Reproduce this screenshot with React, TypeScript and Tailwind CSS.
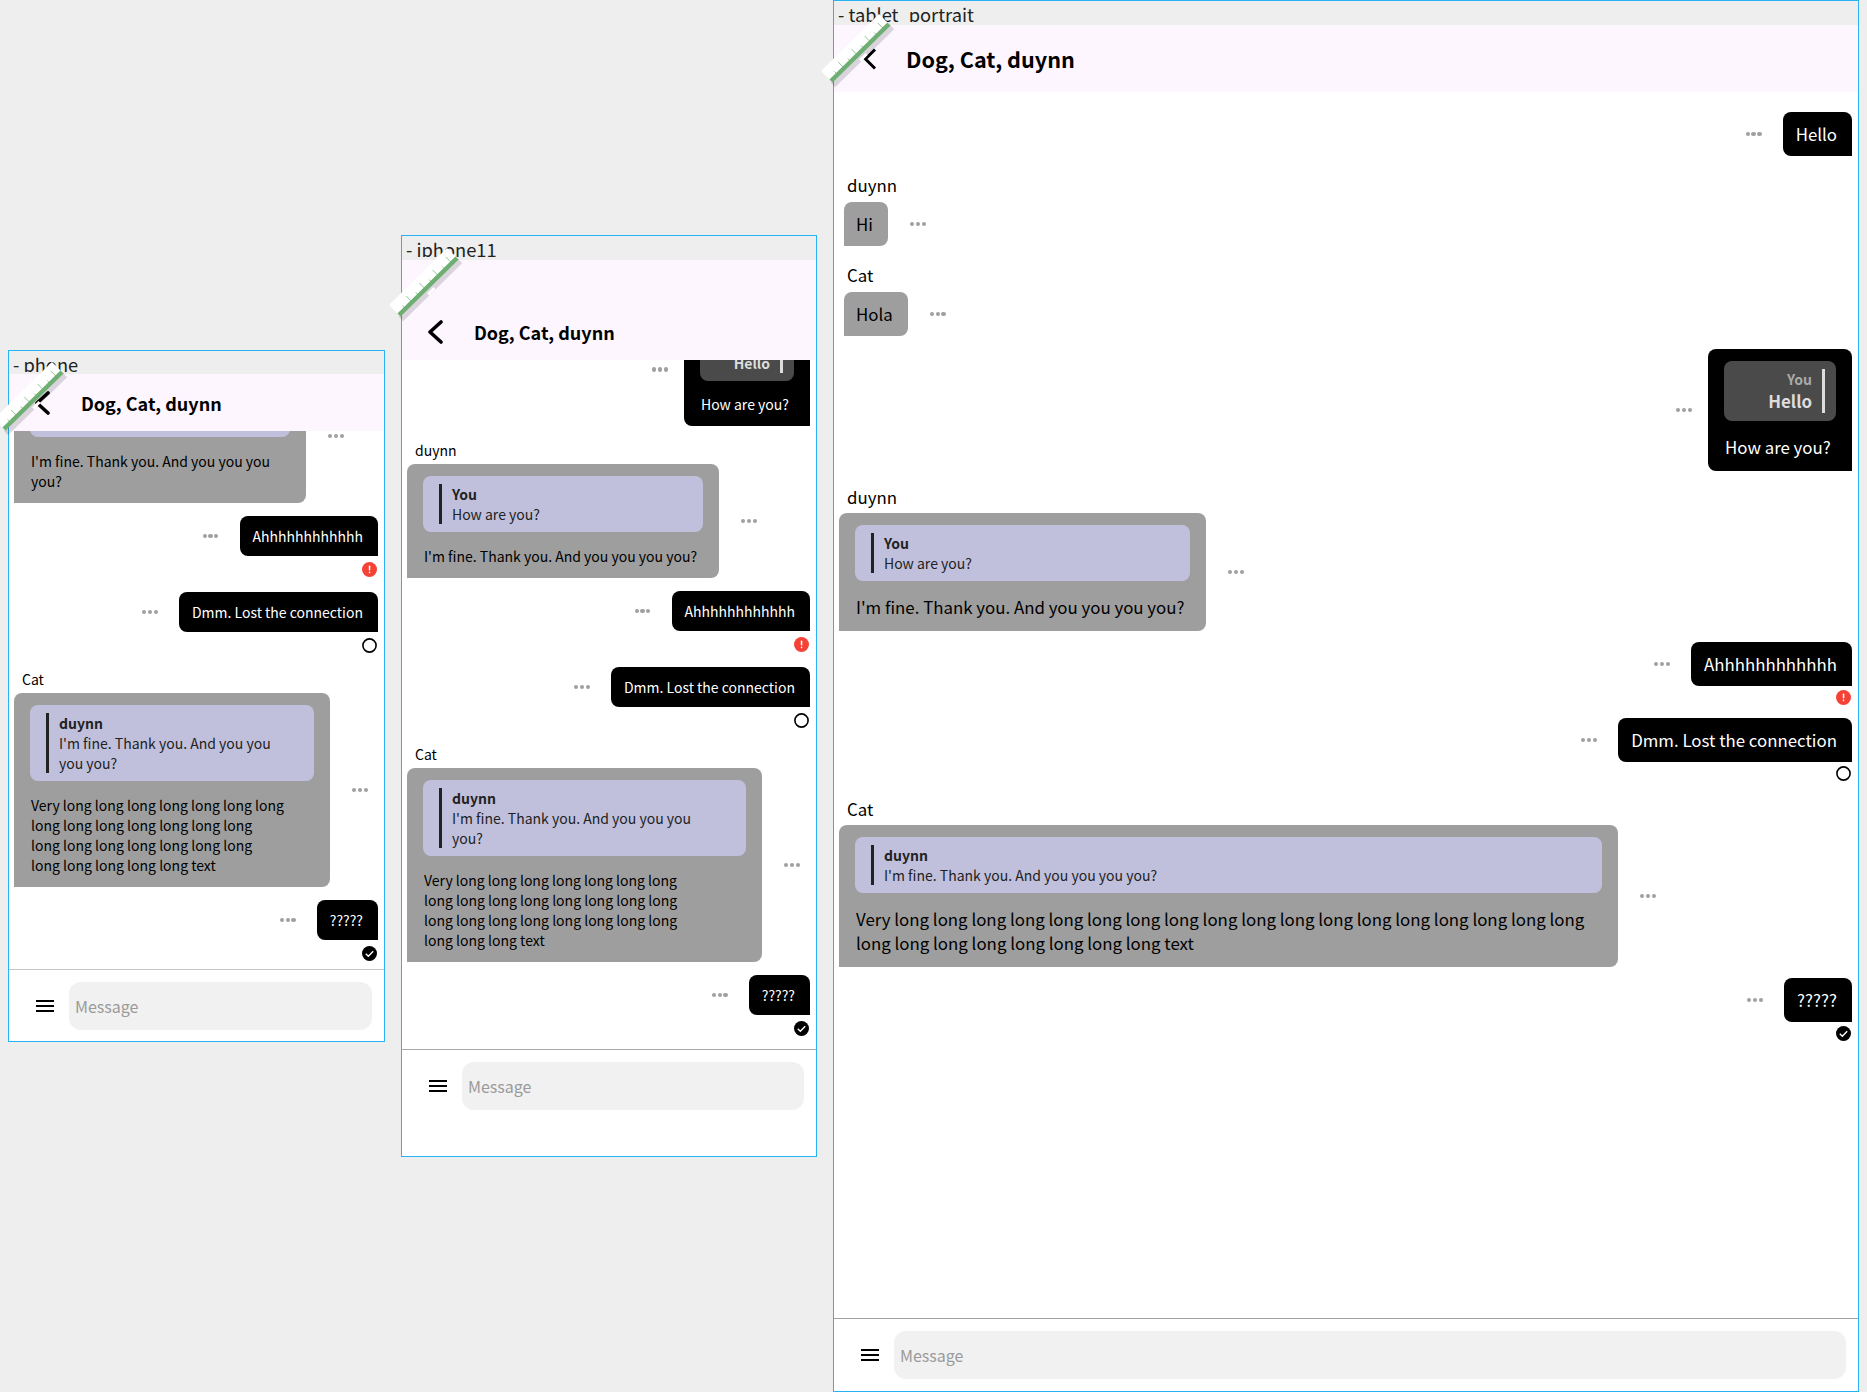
import React from "react";

type Size = {
  text: string;
  name: string;
  statusGap: string;
  title: string;
  quoteTextGap: string;
};

const small: Size = {
  text: "text-[14px] leading-[20px]",
  name: "text-[14px] leading-[20px]",
  statusGap: "mt-[6px]",
  title: "text-[18px] leading-[26px]",
  quoteTextGap: "mt-[13px]",
};

const large: Size = {
  text: "text-[16.85px] leading-[24px]",
  name: "text-[16.85px] leading-[24px]",
  statusGap: "mt-[4px]",
  title: "text-[21.6px] leading-[30px]",
  quoteTextGap: "mt-[14px]",
};

function Dots() {
  return (
    <div className="flex w-[16px] shrink-0 gap-[1.5px]">
      <span className="h-[4.33px] w-[4.33px] rounded-full bg-[#a0a0a0]" />
      <span className="h-[4.33px] w-[4.33px] rounded-full bg-[#a0a0a0]" />
      <span className="h-[4.33px] w-[4.33px] rounded-full bg-[#a0a0a0]" />
    </div>
  );
}

function StatusIcon({ kind }: { kind: "error" | "sending" | "sent" }) {
  if (kind === "error") {
    return (
      <svg width="15" height="15" viewBox="0 0 15 15">
        <circle cx="7.5" cy="7.5" r="7.5" fill="#f44336" />
        <rect x="6.8" y="3.6" width="1.5" height="4.8" rx="0.6" fill="#fff" />
        <rect x="6.8" y="9.6" width="1.5" height="1.6" rx="0.6" fill="#fff" />
      </svg>
    );
  }
  if (kind === "sending") {
    return (
      <svg width="15" height="15" viewBox="0 0 15 15">
        <circle cx="7.5" cy="7.5" r="6.6" fill="none" stroke="#000" strokeWidth="1.6" />
      </svg>
    );
  }
  return (
    <svg width="15" height="15" viewBox="0 0 15 15">
      <circle cx="7.5" cy="7.5" r="7.5" fill="#000" />
      <path d="M3.8 7.8 L6.3 10.2 L11.2 5.2" fill="none" stroke="#fff" strokeWidth="1.4" />
    </svg>
  );
}

function Sent({
  size,
  text,
  status,
  mt,
  width,
  children,
}: {
  size: Size;
  text: string;
  status?: "error" | "sending" | "sent";
  mt: string;
  width?: string;
  children?: React.ReactNode;
}) {
  return (
    <div className={`shrink-0 ${mt}`}>
      <div className={`flex items-center justify-end ${children ? "gap-4" : "gap-[21px]"}`}>
        <Dots />
        {children ? (
          <div className={`rounded-lg rounded-br-none bg-black pb-3 pl-4 pr-4 pt-3 text-white ${size.text} ${width ?? ""}`}>
            {children}
            <p className={`whitespace-nowrap pl-[1px] ${size.quoteTextGap}`}>{text}</p>
          </div>
        ) : (
          <div className={`rounded-lg rounded-br-none bg-black py-[10px] pl-[13px] pr-[15px] text-white ${size.text}`}>
            {text}
          </div>
        )}
      </div>
      {status && (
        <div className={`flex justify-end pr-[1.5px] ${size.statusGap}`}>
          <StatusIcon kind={status} />
        </div>
      )}
    </div>
  );
}

function SentQuote({ who, text, textClass }: { who: string; text: string; textClass: string }) {
  return (
    <div className="rounded-lg bg-[#4a4a4a] py-2 pr-[11px]">
      <div className="flex justify-end gap-[10px]">
        <div className="text-right">
          <p className="text-[14px] font-bold leading-[20px] text-[#aaaaaa]">{who}</p>
          <p className={`font-bold text-[#dddddd] ${textClass}`}>{text}</p>
        </div>
        <div className="w-[3px] bg-[#dddddd]" />
      </div>
    </div>
  );
}

function Quote({ who, text }: { who: string; text: string }) {
  return (
    <div className="rounded-lg bg-[#c0c0dc] py-2 pl-4 pr-4">
      <div className="flex gap-[10px]">
        <div className="w-[3px] shrink-0 bg-[#222222]" />
        <div className="text-[14px] leading-[20px] text-[#222222]">
          <p className="font-bold">{who}</p>
          <p className="whitespace-pre-line">{text}</p>
        </div>
      </div>
    </div>
  );
}

function Received({
  size,
  name,
  mt,
  nameGap,
  width,
  text,
  quote,
  inset,
}: {
  size: Size;
  name: string;
  mt: string;
  nameGap: string;
  width?: string;
  text: string;
  quote?: { who: string; text: string };
  inset?: boolean;
}) {
  return (
    <div className={`shrink-0 ${mt}`}>
      <p className={`ml-[8px] text-black ${size.name} ${nameGap}`}>{name}</p>
      <div className={`flex items-center gap-[22px] ${inset ? "ml-[5px]" : ""}`}>
        {quote ? (
          <div className={`shrink-0 rounded-lg rounded-bl-none bg-[#9e9e9e] pb-3 pl-4 pr-4 pt-3 text-black ${size.text} ${width ?? ""}`}>
            <Quote who={quote.who} text={quote.text} />
            <p className="mt-[14px] whitespace-pre-line pl-[1px]">{text}</p>
          </div>
        ) : (
          <div className={`rounded-lg rounded-bl-none bg-[#9e9e9e] py-[10px] pl-3 pr-[15px] text-black ${size.text}`}>
            {text}
          </div>
        )}
        <Dots />
      </div>
    </div>
  );
}

function BackArrow({ big }: { big: boolean }) {
  return big ? (
    <svg width="24" height="22" viewBox="0 0 24 22">
      <path d="M17 1.5 L7.5 11 L17 20.5" fill="none" stroke="#000" strokeWidth="3" />
    </svg>
  ) : (
    <svg width="24" height="24" viewBox="0 0 24 24">
      <path d="M18 2 L7 12 L18 22" fill="none" stroke="#000" strokeWidth="3.6" strokeLinecap="round" strokeLinejoin="round" />
    </svg>
  );
}

function Ruler({ place }: { place: string }) {
  const ticks = [1, 2, 3, 4, 5, 6, 7, 8];
  return (
    <svg className={`pointer-events-none absolute ${place}`} width="80" height="84" viewBox="0 0 80 84">
      <path d="M11 74 L70 16" stroke="#000" strokeOpacity="0.14" strokeWidth="6" />
      <polygon points="9,70 67,13 57,3 -1,60" fill="#ffffff" />
      {ticks.map((t) => (
        <line
          key={t}
          x1={9 + t * 6.6}
          y1={70 - t * 6.5}
          x2={9 + t * 6.6 - (t % 2 === 0 ? 6 : 3)}
          y2={70 - t * 6.5 - (t % 2 === 0 ? 6 : 3)}
          stroke="#8fc594"
          strokeWidth="1"
        />
      ))}
      <path d="M9 70 L67 13" stroke="#6fae72" strokeWidth="4.5" />
      <rect x="37" y="45" width="9" height="3" fill="#ffffff" transform="rotate(-45 41 46.5)" />
    </svg>
  );
}

function Frame({
  label,
  labelHeight,
  rulerPlace,
  className,
  headerClass,
  titleGap,
  footerClass,
  listClass,
  divider,
  size,
  big,
  children,
}: {
  label: string;
  labelHeight: string;
  rulerPlace: string;
  className: string;
  headerClass: string;
  titleGap: string;
  footerClass: string;
  listClass: string;
  divider: string;
  size: Size;
  big?: boolean;
  children: React.ReactNode;
}) {
  return (
    <div className={`relative flex shrink-0 flex-col border border-[#2ab3f3] ${className}`}>
      <div className={`shrink-0 ${labelHeight}`}>
        <div className="h-[21px] overflow-hidden whitespace-nowrap pl-1 pt-[1px] text-[18.3px] leading-[24px] text-[#222222]">
          {label}
        </div>
      </div>
      <div className={`flex shrink-0 items-center bg-[#fdf6ff] ${headerClass}`}>
        <BackArrow big={!!big} />
        <p className={`font-bold text-black ${size.title} ${titleGap}`}>Dog, Cat, duynn</p>
      </div>
      <div className={`flex min-h-0 flex-1 flex-col overflow-hidden bg-white pl-[5px] pr-[6px] ${listClass}`}>
        {children}
      </div>
      <div className={`flex shrink-0 items-center gap-[15px] border-t bg-white pl-[27px] pr-3 pt-3 ${divider} ${footerClass}`}>
        <div className="flex w-[18px] shrink-0 flex-col gap-[3px]">
          <span className="h-[2px] bg-black" />
          <span className="h-[2px] bg-black" />
          <span className="h-[2px] bg-black" />
        </div>
        <input
          placeholder="Message"
          className="h-[48px] min-w-0 flex-1 rounded-xl bg-[#f1f1f1] pl-[6px] text-[16px] text-black outline-none placeholder:text-[#9a9a9a]"
        />
      </div>
      <Ruler place={rulerPlace} />
    </div>
  );
}

const longPhone =
  "Very long long long long long long long\nlong long long long long long long\nlong long long long long long long\nlong long long long long text";
const longIphone =
  "Very long long long long long long long\nlong long long long long long long long\nlong long long long long long long long\nlong long long text";
const longTablet =
  "Very long long long long long long long long long long long long long long long long long long\nlong long long long long long long long text";

function SmallChat({ long, bubble, longBubble, quoteText }: { long: string; bubble: string; longBubble: string; quoteText: string }) {
  return (
    <>
      <Sent size={small} text="Hello" mt="mt-0" />
      <Received size={small} name="duynn" mt="mt-[14px]" nameGap="mb-1" text="Hi" inset />
      <Received size={small} name="Cat" mt="mt-[14px]" nameGap="mb-1" text="Hola" inset />
      <Sent size={small} text="How are you?" mt="mt-[13px]" width="w-[126px]">
        <SentQuote who="You" text="Hello" textClass="text-[14px] leading-[20px]" />
      </Sent>
      <Received
        size={small}
        name="duynn"
        mt="mt-[14px]"
        nameGap="mb-1"
        width={bubble}
        text="I'm fine. Thank you. And you you you you?"
        quote={{ who: "You", text: "How are you?" }}
      />
      <Sent size={small} text="Ahhhhhhhhhhhh" status="error" mt="mt-[13px]" />
      <Sent size={small} text="Dmm. Lost the connection" status="sending" mt="mt-[15px]" />
      <Received
        size={small}
        name="Cat"
        mt="mt-[16px]"
        nameGap="mb-1"
        width={longBubble}
        text={long}
        quote={{ who: "duynn", text: quoteText }}
      />
      <Sent size={small} text="?????" status="sent" mt="mt-[13px]" />
    </>
  );
}

export default function App() {
  return (
    <div className="flex h-[1392px] items-start gap-4 overflow-hidden bg-[#eeeeee] pl-2 font-['Noto_Sans_CJK_SC',sans-serif]">
      <Frame
        label="- phone"
        labelHeight="h-[23px]"
        rulerPlace="left-[-14px] top-[8px]"
        className="mt-[350px] h-[692px] w-[377px]"
        headerClass="h-[57px] pl-[21px]"
        titleGap="ml-[27px]"
        footerClass="pb-[11px]"
        listClass="justify-end pb-[8px]"
        divider="border-[#c4c4c4]"
        size={small}
      >
        <SmallChat
          long={longPhone}
          bubble="w-[292px]"
          longBubble="w-[316px]"
          quoteText={"I'm fine. Thank you. And you you\nyou you?"}
        />
      </Frame>

      <Frame
        label="- iphone11"
        labelHeight="h-[24px]"
        rulerPlace="left-[-12px] top-[9px]"
        className="mt-[235px] h-[922px] w-[416px]"
        headerClass="h-[100px] pl-[21px] pt-[44px]"
        titleGap="ml-[27px]"
        footerClass="pb-[46px]"
        listClass="justify-end pb-[13px]"
        divider="border-[#a8a8a8]"
        size={small}
      >
        <SmallChat
          long={longIphone}
          bubble="w-[312px]"
          longBubble="w-[355px]"
          quoteText={"I'm fine. Thank you. And you you you\nyou?"}
        />
      </Frame>

      <Frame
        label="- tablet_portrait"
        labelHeight="h-[24px]"
        rulerPlace="left-[-12px] top-[10px]"
        className="h-[1392px] w-[1026px]"
        headerClass="h-[67px] pl-[24px]"
        titleGap="ml-[24px]"
        footerClass="pb-3"
        listClass="pt-[20px]"
        divider="border-[#a0a0a0]"
        size={large}
        big
      >
        <Sent size={large} text="Hello" mt="mt-0" />
        <Received size={large} name="duynn" mt="mt-[17px]" nameGap="mb-[5px]" text="Hi" inset />
        <Received size={large} name="Cat" mt="mt-[17px]" nameGap="mb-[5px]" text="Hola" inset />
        <Sent size={large} text="How are you?" mt="mt-[13px]" width="w-[144px]">
          <SentQuote who="You" text="Hello" textClass="text-[16.85px] leading-[24px]" />
        </Sent>
        <Received
          size={large}
          name="duynn"
          mt="mt-[14px]"
          nameGap="mb-1"
          width="w-[367px]"
          text="I'm fine. Thank you. And you you you you?"
          quote={{ who: "You", text: "How are you?" }}
        />
        <Sent size={large} text="Ahhhhhhhhhhhh" status="error" mt="mt-[11px]" />
        <Sent size={large} text="Dmm. Lost the connection" status="sending" mt="mt-[13px]" />
        <Received
          size={large}
          name="Cat"
          mt="mt-[16px]"
          nameGap="mb-1"
          width="w-[779px]"
          text={longTablet}
          quote={{ who: "duynn", text: "I'm fine. Thank you. And you you you you?" }}
        />
        <Sent size={large} text="?????" status="sent" mt="mt-[11px]" />
      </Frame>
    </div>
  );
}
